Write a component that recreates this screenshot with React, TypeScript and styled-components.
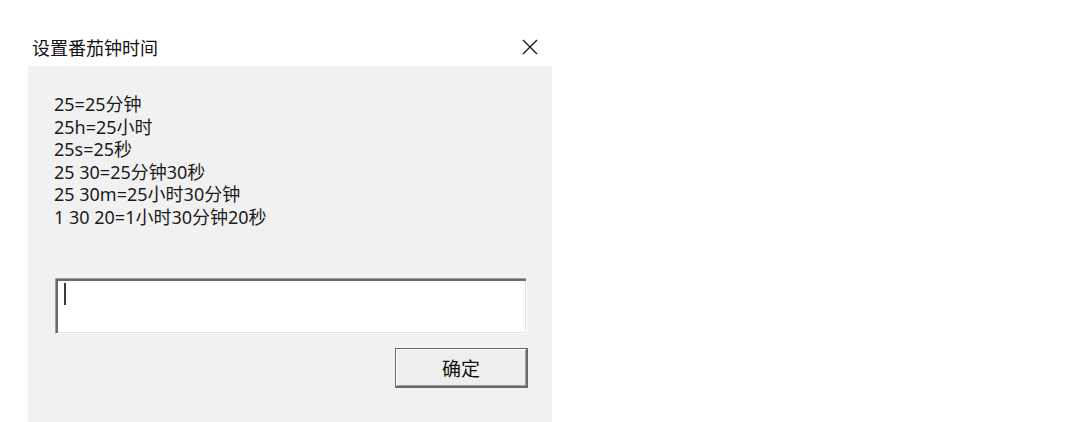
import React from "react";
import styled, { createGlobalStyle } from "styled-components";

const GlobalStyle = createGlobalStyle`
  html, body {
    margin: 0;
    padding: 0;
    background: #ffffff;
  }
  body {
    font-family: "Noto Sans", "Noto Sans CJK SC", sans-serif;
  }
`;

const Dialog = styled.div`
  width: 524px;
  margin-left: 28px;
  display: flex;
  flex-direction: column;
`;

const TitleBar = styled.div`
  height: 66px;
  display: flex;
  align-items: center;
  justify-content: space-between;
  padding: 27px 14px 0 4px;
  box-sizing: border-box;
`;

const Title = styled.span`
  font-family: "Noto Sans", "Noto Sans CJK SC", sans-serif;
  font-size: 18px;
  color: #111;
`;

const CloseButton = styled.button`
  width: 16px;
  height: 16px;
  padding: 0;
  border: none;
  background: transparent;
  display: flex;
  align-items: center;
  justify-content: center;
  cursor: pointer;
`;

const Panel = styled.div`
  background: #f1f1f1;
  height: 356px;
  box-sizing: border-box;
  padding: 27px 25px 0 27px;
  display: flex;
  flex-direction: column;
`;

const Help = styled.div`
  font-family: "Noto Sans", "Noto Sans CJK SC", sans-serif;
  font-size: 18px;
  line-height: 22.5px;
  color: #1b1b1b;
  margin-left: -1px;
`;

const Line = styled.div``;

const TextBox = styled.div`
  margin-top: 50px;
  height: 56px;
  box-sizing: border-box;
  background: #ffffff;
  border-style: solid;
  border-width: 1px;
  border-color: #a0a0a0 #ffffff #ffffff #a0a0a0;
  box-shadow: inset 2px 2px 0 #6b6b6b, inset -1px -1px 0 #e3e3e3;
  padding: 4px 0 0 8px;
`;

const Caret = styled.span`
  display: block;
  width: 2px;
  height: 22px;
  background: #3a3a3a;
`;

const Actions = styled.div`
  margin-top: 14px;
  display: flex;
  justify-content: flex-end;
`;

const OkButton = styled.button`
  width: 133px;
  height: 40px;
  box-sizing: border-box;
  background: #eeeeee;
  border: 1px solid #6a6a6a;
  border-right-width: 2px;
  border-bottom-width: 2px;
  box-shadow: inset 1px 1px 0 #ffffff, inset -1px -1px 0 #a0a0a0;
  font-family: "Noto Sans", "Noto Sans CJK SC", sans-serif;
  font-size: 19px;
  color: #111;
  padding: 0;
  margin-right: -1px;
  cursor: pointer;
`;

const lines = [
  "25=25分钟",
  "25h=25小时",
  "25s=25秒",
  "25 30=25分钟30秒",
  "25 30m=25小时30分钟",
  "1 30 20=1小时30分钟20秒",
];

export default function App() {
  return (
    <>
      <GlobalStyle />
      <Dialog>
        <TitleBar>
          <Title>设置番茄钟时间</Title>
          <CloseButton aria-label="关闭">
            <svg width="16" height="16" viewBox="0 0 16 16">
              <path d="M1 1 L15 15 M15 1 L1 15" stroke="#111" strokeWidth="1.2" fill="none" />
            </svg>
          </CloseButton>
        </TitleBar>
        <Panel>
          <Help>
            {lines.map((l) => (
              <Line key={l}>{l}</Line>
            ))}
          </Help>
          <TextBox>
            <Caret />
          </TextBox>
          <Actions>
            <OkButton>确定</OkButton>
          </Actions>
        </Panel>
      </Dialog>
    </>
  );
}
